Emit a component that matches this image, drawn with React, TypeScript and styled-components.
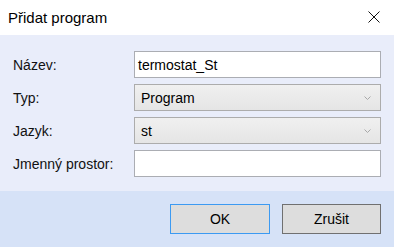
import React from "react";
import styled, { createGlobalStyle } from "styled-components";

const Global = createGlobalStyle`
  html, body { margin: 0; padding: 0; background: #ffffff; }
  body { font-family: "Liberation Sans", Arial, sans-serif; }
  * { box-sizing: border-box; }
`;

const Dialog = styled.div`
  width: 394px;
  height: 247px;
  display: flex;
  flex-direction: column;
  background: #ffffff;
  color: #000;
  font-family: "Liberation Sans", Arial, sans-serif;
`;

const TitleBar = styled.div`
  height: 35px;
  display: flex;
  align-items: center;
  justify-content: space-between;
  padding: 0 14px 1px 8px;
  background: #ffffff;
`;

const Title = styled.div`
  font-size: 15px;
  color: #000;
`;

const CloseIcon = styled.svg`
  width: 12px;
  height: 12px;
  display: block;
`;

const Body = styled.div`
  background: #e9edfa;
  padding: 16px 13px 14px 13px;
  display: grid;
  grid-template-columns: 121px 1fr;
  grid-auto-rows: 27px;
  row-gap: 6px;
  align-items: center;
`;

const Label = styled.label`
  font-size: 14px;
  color: #111;
`;

const TextField = styled.div`
  height: 27px;
  background: #ffffff;
  border: 1px solid #abadb3;
  display: flex;
  align-items: center;
  padding: 0 3px;
  font-size: 14px;
`;

const Select = styled.div`
  height: 27px;
  background: linear-gradient(#f0f0f0, #e5e5e5);
  border: 1px solid #acacac;
  display: flex;
  align-items: center;
  justify-content: space-between;
  padding: 0 9px 0 6px;
  font-size: 14px;
`;

const Chevron = styled.svg`
  width: 7px;
  height: 4px;
  display: block;
`;

const Footer = styled.div`
  flex: 1;
  background: #d6e2f7;
  display: flex;
  justify-content: flex-end;
  align-items: flex-start;
  gap: 12px;
  padding: 13px 13px 0 0;
`;

const Button = styled.button<{ $default?: boolean }>`
  width: ${(p) => (p.$default ? "100px" : "99px")};
  height: 30px;
  background: #dddddd;
  border: 1px solid ${(p) => (p.$default ? "#3c9af2" : "#707070")};
  font-family: "Liberation Sans", Arial, sans-serif;
  font-size: 14px;
  color: #000;
  padding: 0;
`;

const ChevronDown = () => (
  <Chevron viewBox="0 0 7 4">
    <path d="M0.5 0.5 L3.5 3.5 L6.5 0.5" fill="none" stroke="#a8a8a8" strokeWidth="1" />
  </Chevron>
);

export default function App() {
  return (
    <Dialog>
      <Global />
      <TitleBar>
        <Title>Přidat program</Title>
        <CloseIcon viewBox="0 0 12 12">
          <path d="M0.5 0.5 L11.5 11.5 M11.5 0.5 L0.5 11.5" stroke="#111" strokeWidth="1" />
        </CloseIcon>
      </TitleBar>
      <Body>
        <Label>Název:</Label>
        <TextField>termostat_St</TextField>
        <Label>Typ:</Label>
        <Select>
          <span>Program</span>
          <ChevronDown />
        </Select>
        <Label>Jazyk:</Label>
        <Select>
          <span>st</span>
          <ChevronDown />
        </Select>
        <Label>Jmenný prostor:</Label>
        <TextField />
      </Body>
      <Footer>
        <Button $default>OK</Button>
        <Button>Zrušit</Button>
      </Footer>
    </Dialog>
  );
}
